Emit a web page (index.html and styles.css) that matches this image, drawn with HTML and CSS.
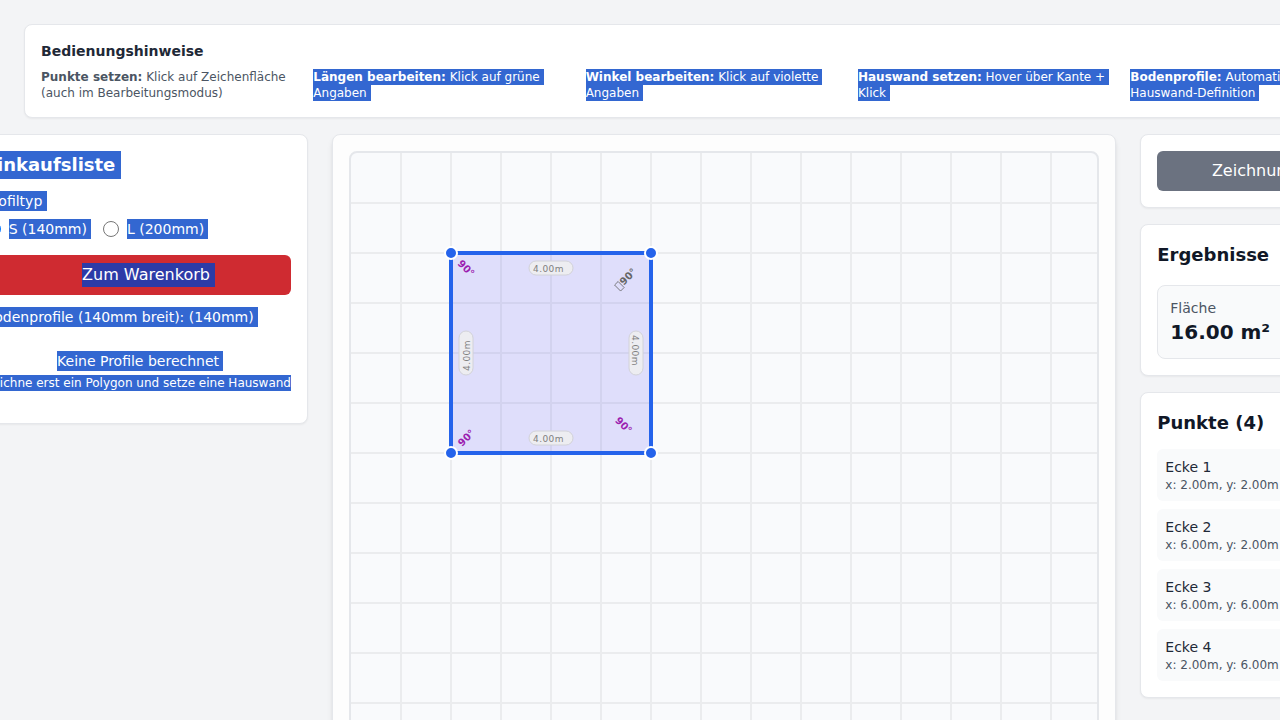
FILE: index.html
```html
<!DOCTYPE html>
<html lang="de">
<head>
<meta charset="utf-8">
<title>Terrassenplaner</title>
<link rel="stylesheet" href="styles.css">
</head>
<body>
<div class="page">
  <section class="card hints">
    <h3 class="hints-title">Bedienungshinweise</h3>
    <div class="hints-grid">
      <div><strong>Punkte setzen:</strong> Klick auf Zeichenfläche<br>(auch im Bearbeitungsmodus)</div>
      <div><span class="sel"><strong>Längen bearbeiten:</strong> Klick auf grüne</span><span class="sel">Angaben</span></div>
      <div><span class="sel"><strong>Winkel bearbeiten:</strong> Klick auf violette</span><span class="sel">Angaben</span></div>
      <div><span class="sel"><strong>Hauswand setzen:</strong> Hover über Kante +</span><span class="sel">Klick</span></div>
      <div><span class="sel"><strong>Bodenprofile:</strong> Automatisch nach</span><span class="sel">Hauswand-Definition</span></div>
    </div>
  </section>

  <main class="columns">
    <aside class="card shopping">
      <h2 class="title sel sel-lg">Einkaufsliste</h2>
      <div class="label sel">Profiltyp</div>
      <div class="radios">
        <label class="radio"><input type="radio" name="profil" checked><span class="sel">S (140mm)</span></label>
        <label class="radio"><input type="radio" name="profil"><span class="sel">L (200mm)</span></label>
      </div>
      <button class="btn btn-red"><span class="sel-red">Zum Warenkorb</span></button>
      <div class="profile sel">Bodenprofile (140mm breit): (140mm)</div>
      <div class="empty">
        <div class="sel empty-title">Keine Profile berechnet</div>
        <div class="sel empty-note">Zeichne erst ein Polygon und setze eine Hauswand</div>
      </div>
    </aside>

    <section class="card drawing">
      <svg class="canvas" width="746" height="600" viewBox="0 0 746 600">
        <path class="grid-line" d="M50 0V600M100 0V600M150 0V600M200 0V600M250 0V600M300 0V600M350 0V600M400 0V600M450 0V600M500 0V600M550 0V600M600 0V600M650 0V600M700 0V600M0 50H746M0 100H746M0 150H746M0 200H746M0 250H746M0 300H746M0 350H746M0 400H746M0 450H746M0 500H746M0 550H746"/>
        <rect class="shape" x="100" y="100" width="200" height="200"/>
        <g class="length" transform="translate(200 115)"><rect x="-22" y="-7" width="44" height="14" rx="7"/><text x="-18" y="4">4.00m</text></g>
        <g class="length" transform="translate(285 200) rotate(90)"><rect x="-22" y="-7" width="44" height="14" rx="7"/><text x="-18" y="4">4.00m</text></g>
        <g class="length" transform="translate(200 285)"><rect x="-22" y="-7" width="44" height="14" rx="7"/><text x="-18" y="4">4.00m</text></g>
        <g class="length" transform="translate(115 200) rotate(-90)"><rect x="-22" y="-7" width="44" height="14" rx="7"/><text x="-18" y="4">4.00m</text></g>
        <text class="angle" transform="translate(106 111) rotate(45)">90°</text>
        <text class="angle" transform="translate(111 294) rotate(-45)">90°</text>
        <text class="angle" transform="translate(263.5 268) rotate(45)">90°</text>
        <g class="angle-locked" transform="translate(271 134.5) rotate(-45)"><rect x="-3.5" y="-7" width="5" height="8.5"/><text x="2.5" y="0">90°</text></g>
        <g class="nodes"><circle cx="100" cy="100" r="6"/><circle cx="300" cy="100" r="6"/><circle cx="300" cy="300" r="6"/><circle cx="100" cy="300" r="6"/></g>
      </svg>
    </section>

    <aside class="side">
      <section class="card"><button class="btn btn-gray">Zeichnung löschen</button></section>
      <section class="card">
        <h2 class="title">Ergebnisse</h2>
        <div class="result"><div class="result-label">Fläche</div><div class="result-value">16.00 m²</div></div>
      </section>
      <section class="card">
        <h2 class="title">Punkte (4)</h2>
        <ul class="points">
          <li><b>Ecke 1</b><span>x: 2.00m, y: 2.00m</span></li>
          <li><b>Ecke 2</b><span>x: 6.00m, y: 2.00m</span></li>
          <li><b>Ecke 3</b><span>x: 6.00m, y: 6.00m</span></li>
          <li><b>Ecke 4</b><span>x: 2.00m, y: 6.00m</span></li>
        </ul>
      </section>
    </aside>
  </main>
</div>
</body>
</html>
```
FILE: styles.css
```css
* { box-sizing: border-box; }
html, body { height: 100%; }
body {
  margin: 0;
  overflow: hidden;
  background: #f3f4f6;
  color: #111827;
  font: 14px/20px "DejaVu Sans", sans-serif;
}
h2, h3, ul { margin: 0; padding: 0; }
.page { padding: 24px; height: 720px; overflow: hidden; }
.card {
  background: #fff;
  border: 1px solid #e5e7eb;
  border-radius: 8px;
  padding: 16px;
  box-shadow: 0 1px 2px rgba(0, 0, 0, .05);
}
.sel {
  display: block;
  width: fit-content;
  padding-right: 4px;
  background: #3367d1;
  color: #fff;
  white-space: nowrap;
}

.hints { width: 1379.6px; }
.hints-title { font-size: 14px; line-height: 20px; color: #1f2937; margin-bottom: 8px; }
.hints-grid {
  display: grid;
  grid-template-columns: repeat(5, 1fr);
  gap: 16px;
  font-size: 12px;
  line-height: 16px;
  color: #4b5563;
}
.hints-grid .sel { padding-right: 3.8px; }

.columns {
  display: flex;
  align-items: flex-start;
  gap: 24px;
  width: 1513px;
  margin: 16px 0 0 -56.3px;
}
.title { font-size: 18px; line-height: 28px; font-weight: 700; }
.sel-lg { padding-right: 5.6px; }

.shopping { width: 340.3px; flex: none; }
.label { margin-top: 12px; padding-right: 4.4px; }
.radios { display: flex; gap: 12px; margin-top: 8px; }
.radio { display: flex; align-items: center; gap: 8px; }
.radio input { width: 16px; height: 16px; margin: 0; }
.btn {
  display: flex;
  align-items: center;
  width: 100%;
  height: 40px;
  padding: 0;
  border: 0;
  border-radius: 6px;
  color: #fff;
  font: 16px/24px "DejaVu Sans", sans-serif;
}
.btn-red { margin-top: 16px; padding-left: 97.4px; background: #cf2b31; }
.sel-red { padding-right: 5px; background: #2c3ba7; }
.profile { margin-top: 12px; }
.empty {
  display: flex;
  flex-direction: column;
  align-items: center;
  padding: 24px 0 16px;
}
.empty-title { margin-left: 4.4px; }
.empty-note { margin-top: 4px; padding: 0; font-size: 12px; line-height: 16px; align-self: flex-end; }

.drawing {
  width: 784.3px;
  flex: none;
  background: #fdfdfd;
  box-shadow: 0 4px 6px -1px rgba(0, 0, 0, .1), 0 2px 4px -2px rgba(0, 0, 0, .1);
}
.canvas {
  display: block;
  box-sizing: content-box;
  border: 2px solid #e5e7eb;
  border-radius: 8px;
  background: #f9fafc;
}
.grid-line { fill: none; stroke: #ebecee; stroke-width: 2; }
.shape { fill: rgba(91, 86, 248, .165); stroke: #2563eb; stroke-width: 4; }
.length rect { fill: #ededf1; stroke: #d2d2d8; stroke-width: 1; }
.length text { fill: #808080; font-size: 9px; letter-spacing: .4px; }
.angle { fill: #9c1fb0; font-size: 10px; font-weight: 700; }
.angle-locked text { fill: #666; font-size: 10px; font-weight: 700; }
.angle-locked rect { fill: none; stroke: #666; stroke-width: .8; }
.nodes circle { fill: #2563eb; stroke: #fff; stroke-width: 2; }

.side { width: 340px; flex: none; display: flex; flex-direction: column; gap: 16px; }
.btn-gray { padding-left: 54.6px; background: #6b7280; }
.result {
  margin-top: 16px;
  padding: 12px;
  border: 1px solid #e5e7eb;
  border-radius: 8px;
  background: #f9fafb;
}
.result-label { color: #4b5563; }
.result-value { font-size: 20px; line-height: 28px; font-weight: 700; }
.points { display: grid; gap: 8px; margin-top: 12px; list-style: none; }
.points li { padding: 8px; border-radius: 6px; background: #f9fafb; }
.points b { display: block; font-weight: 400; color: #1f2937; }
.points span { display: block; font-size: 12px; line-height: 16px; color: #4b5563; }
```
